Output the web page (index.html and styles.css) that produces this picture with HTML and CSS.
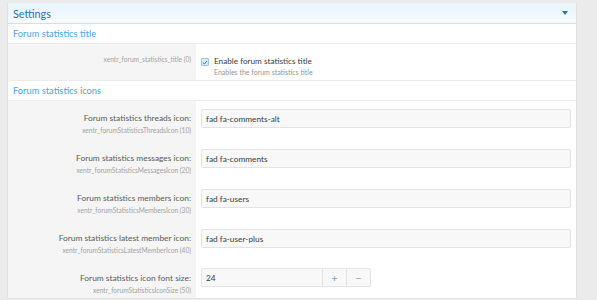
FILE: index.html
```html
<!DOCTYPE html>
<html>
<head>
<meta charset="utf-8">
<link rel="stylesheet" href="styles.css">
</head>
<body>
<div class="block">
  <div class="block-header">
    <span>Settings</span>
    <span class="caret"></span>
  </div>
  <div class="section-header">Forum statistics title</div>
  <div class="row row-check">
    <div class="label">
      <div class="hint">xentr_forum_statistics_title (0)</div>
    </div>
    <div class="control">
      <label class="check">
        <span class="box"><svg width="7" height="7" viewBox="0 0 8 8"><path d="M1.2 4.2 L3.2 6 L6.8 1.8" fill="none" stroke="#2577b1" stroke-width="1.2"/></svg></span>
        <span class="check-text">
          <span class="check-title">Enable forum statistics title</span>
          <span class="check-hint">Enables the forum statistics title</span>
        </span>
      </label>
    </div>
  </div>
  <div class="section-header">Forum statistics icons</div>
  <div class="row">
    <div class="label">
      <div class="term">Forum statistics threads icon:</div>
      <div class="hint">xentr_forumStatisticsThreadsIcon (10)</div>
    </div>
    <div class="control"><div class="input">fad fa-comments-alt</div></div>
  </div>
  <div class="row">
    <div class="label">
      <div class="term">Forum statistics messages icon:</div>
      <div class="hint">xentr_forumStatisticsMessagesIcon (20)</div>
    </div>
    <div class="control"><div class="input">fad fa-comments</div></div>
  </div>
  <div class="row">
    <div class="label">
      <div class="term">Forum statistics members icon:</div>
      <div class="hint">xentr_forumStatisticsMembersIcon (30)</div>
    </div>
    <div class="control"><div class="input">fad fa-users</div></div>
  </div>
  <div class="row">
    <div class="label">
      <div class="term">Forum statistics latest member icon:</div>
      <div class="hint">xentr_forumStatisticsLatestMemberIcon (40)</div>
    </div>
    <div class="control"><div class="input">fad fa-user-plus</div></div>
  </div>
  <div class="row row-last">
    <div class="label">
      <div class="term">Forum statistics icon font size:</div>
      <div class="hint">xentr_forumStatisticsIconSize (50)</div>
    </div>
    <div class="control">
      <div class="spinbox">
        <div class="spin-input">24</div>
        <div class="spin-btn">+</div>
        <div class="spin-btn">&minus;</div>
      </div>
    </div>
  </div>
</div>
</body>
</html>
```

FILE: styles.css
```css
* { box-sizing: border-box; }
html, body { margin: 0; }
body {
  background: #ebebeb;
  padding: 3px 20px 0 7px;
  font-family: Lato, "Open Sans", sans-serif;
  color: #505050;
  height: 300px;
  overflow: hidden;
}
.block {
  background: #fff;
  border-left: 1px solid #e0e0e0;
  border-right: 1px solid #e0e0e0;
}
.block-header {
  height: 21px;
  display: flex;
  align-items: center;
  justify-content: space-between;
  padding: 0 7px 0 5px;
  font-size: 10.8px;
  color: #2577b1;
  background: linear-gradient(to bottom, #e9f4fc, #f8fbfe);
  border-bottom: 1px solid #d3dfe8;
}
.caret {
  width: 0; height: 0;
  border-left: 3.5px solid transparent;
  border-right: 3.5px solid transparent;
  border-top: 4px solid #2577b1;
  margin-right: 1px;
}
.section-header {
  height: 20px;
  display: flex;
  align-items: center;
  padding: 0 5px;
  font-size: 9.3px;
  color: #4aa5e3;
  border-bottom: 1px solid #ececec;
}
.row {
  display: grid;
  grid-template-columns: 188px 1fr;
  height: 40px;
}
.row-check {
  height: 37px;
  border-bottom: 1px solid #ececec;
}
.row-last { height: 38px; border-bottom: 1px solid #e3e3e3; }
.label {
  background: #f5f5f5;
  text-align: right;
  padding: 11px 5px 0 0;
}
.row-check .label { padding-top: 9px; }
.term {
  font-size: 8.4px;
  line-height: 12px;
  color: #5a5a5a;
  white-space: nowrap;
}
.hint {
  font-size: 6.6px;
  line-height: 9px;
  color: #a3a3a3;
  white-space: nowrap;
  margin-top: 2px;
}
.control {
  padding: 8px 5px 0 5px;
}
.input {
  height: 19px;
  border: 1px solid #e4e4e4;
  border-radius: 2px;
  background: #f8f8f8;
  font-size: 8.3px;
  color: #3a3a3a;
  padding: 0 4px;
  display: flex;
  align-items: center;
}
.check {
  display: flex;
  align-items: flex-start;
  gap: 5px;
  padding-top: 3px;
}
.box {
  width: 8px; height: 8px;
  margin-top: 3px;
  border: 1px solid #9cc3e2;
  background: #dcecf8;
  display: flex;
  align-items: center;
  justify-content: center;
  border-radius: 1px;
}
.check-text { display: flex; flex-direction: column; }
.check-title { font-size: 8.2px; line-height: 12px; color: #3a3a3a; }
.check-hint { font-size: 7px; line-height: 10px; color: #959595; }
.spinbox {
  display: flex;
  width: 170px;
  height: 19px;
  border: 1px solid #e4e4e4;
  border-radius: 2px;
  background: #f8f8f8;
}
.row-last .control { padding-top: 7px; }
.spin-input {
  flex: 1;
  font-size: 8.3px;
  color: #3a3a3a;
  padding: 0 4px;
  display: flex;
  align-items: center;
}
.spin-btn {
  width: 24px;
  border-left: 1px solid #e4e4e4;
  display: flex;
  align-items: center;
  justify-content: center;
  color: #7ab6e3;
  font-size: 10px;
  font-weight: 700;
}
```
